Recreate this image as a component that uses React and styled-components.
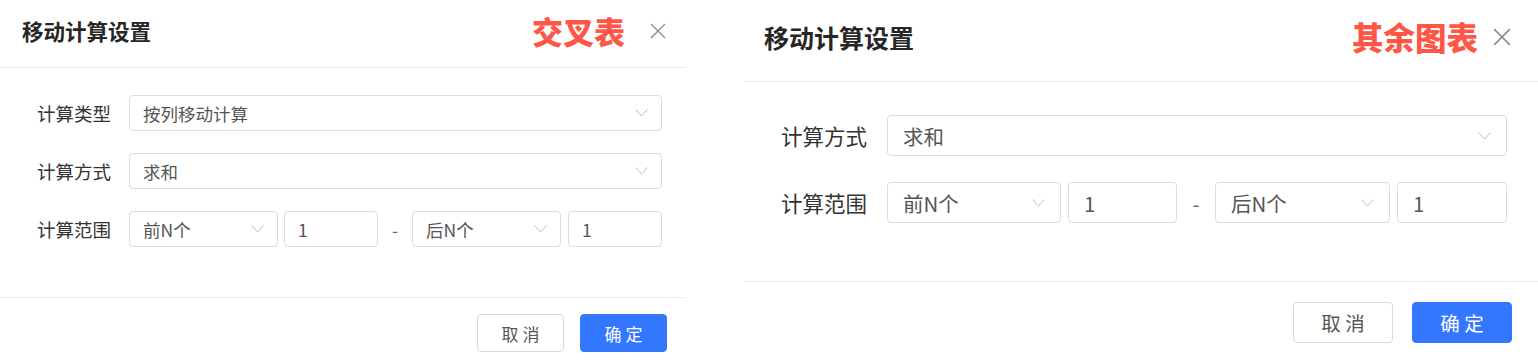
import React from "react"
import styled, { createGlobalStyle, ThemeProvider } from "styled-components"

const GlobalStyle = createGlobalStyle`
  html, body {
    margin: 0;
    padding: 0;
    background: #fff;
  }
  body {
    font-family: "Noto Sans CJK SC", "Noto Sans", sans-serif;
  }
  * {
    box-sizing: border-box;
  }
`

// metrics for each of the two dialogs (the right one is a larger capture)
const crossTable = {
  width: 686, padL: 22, padR: 20, headerH: 68, headerShift: 6,
  titleSize: 21.5, tagSize: 31, tagGap: 25, closeSize: 16,
  bodyTop: 27, bodyLeft: 37, bodyRight: 24, bodyBottom: 50,
  labelW: 92, labelSize: 18.5, rowH: 36, rowGap: 22, fieldSize: 17.5, fieldPad: 13,
  sel: [149, 149], input: [94, 94], pairGap: [6, 7], dashW: 34,
  footTop: 16, footRight: 19, btnW: 87, btnH: 38, btnGap: 16, btnSize: 17,
}

const otherCharts = {
  width: 794, padL: 20, padR: 27, headerH: 82, headerShift: 8,
  titleSize: 25, tagSize: 31.5, tagGap: 15, closeSize: 18,
  bodyTop: 33, bodyLeft: 37, bodyRight: 31, bodyBottom: 58,
  labelW: 106, labelSize: 21.5, rowH: 41, rowGap: 26, fieldSize: 20.5, fieldPad: 15,
  sel: [174, 175], input: [109, 110], pairGap: [7, 7], dashW: 38,
  footTop: 20, footRight: 26, btnW: 100, btnH: 41, btnGap: 19, btnSize: 19.5,
}

const Page = styled.div`
  display: flex;
  gap: 58px;
  width: 1538px;
  height: 364px;
  overflow: hidden;
`

const Dialog = styled.section`
  width: ${p => p.theme.width}px;
  height: 364px;
  flex-shrink: 0;
  display: flex;
  flex-direction: column;
  background: #fff;
`

const Header = styled.header`
  height: ${p => p.theme.headerH}px;
  display: flex;
  align-items: center;
  padding: 0 ${p => p.theme.padR}px ${p => p.theme.headerShift}px ${p => p.theme.padL}px;
  border-bottom: 1px solid #ebebeb;
`

const Title = styled.h2`
  margin: 0;
  font-size: ${p => p.theme.titleSize}px;
  font-weight: 600;
  color: #262626;
  line-height: 1.2;
`

const Tag = styled.span`
  margin-left: auto;
  margin-right: ${p => p.theme.tagGap}px;
  font-size: ${p => p.theme.tagSize}px;
  font-weight: 900;
  color: #ff5747;
  line-height: 1;
`

const Close = styled.button`
  width: ${p => p.theme.closeSize}px;
  height: ${p => p.theme.closeSize}px;
  padding: 0;
  border: none;
  background: none;
  display: flex;
  svg {
    width: 100%;
    height: 100%;
  }
`

const Body = styled.div`
  display: flex;
  flex-direction: column;
  gap: ${p => p.theme.rowGap}px;
  padding: ${p => p.theme.bodyTop}px ${p => p.theme.bodyRight}px ${p => p.theme.bodyBottom}px ${p => p.theme.bodyLeft}px;
  border-bottom: 1px solid #ebebeb;
`

const Row = styled.div`
  display: grid;
  grid-template-columns: ${p => p.theme.labelW}px 1fr;
  align-items: center;
  height: ${p => p.theme.rowH}px;
`

const Label = styled.label`
  font-size: ${p => p.theme.labelSize}px;
  color: #333;
  white-space: nowrap;
`

const Range = styled.div`
  display: flex;
  height: 100%;
`

const Field = styled.div`
  height: 100%;
  display: flex;
  align-items: center;
  justify-content: space-between;
  padding: 0 ${p => p.theme.fieldPad}px;
  border: 1px solid #dcdcdc;
  border-radius: 4px;
  font-size: ${p => p.theme.fieldSize}px;
  color: #555;
  width: ${p => (p.$w ? `${p.$w}px` : "auto")};
  margin-left: ${p => p.$ml || 0}px;
  flex-shrink: 0;
  svg {
    width: 13px;
    height: 8px;
  }
`

const Dash = styled.span`
  width: ${p => p.theme.dashW}px;
  display: flex;
  align-items: center;
  justify-content: center;
  font-size: ${p => p.theme.fieldSize}px;
  color: #666;
`

const Footer = styled.footer`
  display: flex;
  justify-content: flex-end;
  gap: ${p => p.theme.btnGap}px;
  padding: ${p => p.theme.footTop}px ${p => p.theme.footRight}px 0 0;
`

const Button = styled.button`
  width: ${p => p.theme.btnW}px;
  height: ${p => p.theme.btnH}px;
  border-radius: 4px;
  font-family: inherit;
  font-size: ${p => p.theme.btnSize}px;
  border: 1px solid ${p => (p.$primary ? "#3377ff" : "#d9d9d9")};
  background: ${p => (p.$primary ? "#3377ff" : "#fff")};
  color: ${p => (p.$primary ? "#fff" : "#555")};
  white-space: pre;
  padding: 0;
`

const Chevron = () => (
  <svg viewBox="0 0 13 8" fill="none">
    <polyline points="0.5,0.5 6.5,7 12.5,0.5" stroke="#bdbdbd" strokeWidth="1" />
  </svg>
)

const CloseIcon = () => (
  <svg viewBox="0 0 16 16" fill="none">
    <path d="M1 1 L15 15 M15 1 L1 15" stroke="#8a8a8a" strokeWidth="1.3" />
  </svg>
)

const Select = ({ value, w, ml }) => (
  <Field $w={w} $ml={ml}>
    <span>{value}</span>
    <Chevron />
  </Field>
)

const SettingsDialog = ({ metrics, tag, showType }) => (
  <ThemeProvider theme={metrics}>
    <Dialog>
      <Header>
        <Title>移动计算设置</Title>
        <Tag>{tag}</Tag>
        <Close aria-label="关闭">
          <CloseIcon />
        </Close>
      </Header>
      <Body>
        {showType && (
          <Row>
            <Label>计算类型</Label>
            <Select value="按列移动计算" />
          </Row>
        )}
        <Row>
          <Label>计算方式</Label>
          <Select value="求和" />
        </Row>
        <Row>
          <Label>计算范围</Label>
          <Range>
            <Select value="前N个" w={metrics.sel[0]} />
            <Field $w={metrics.input[0]} $ml={metrics.pairGap[0]}>1</Field>
            <Dash>-</Dash>
            <Select value="后N个" w={metrics.sel[1]} />
            <Field $w={metrics.input[1]} $ml={metrics.pairGap[1]}>1</Field>
          </Range>
        </Row>
      </Body>
      <Footer>
        <Button>取 消</Button>
        <Button $primary>确 定</Button>
      </Footer>
    </Dialog>
  </ThemeProvider>
)

const App = () => (
  <>
    <GlobalStyle />
    <Page>
      <SettingsDialog metrics={crossTable} tag="交叉表" showType />
      <SettingsDialog metrics={otherCharts} tag="其余图表" />
    </Page>
  </>
)

export default App
